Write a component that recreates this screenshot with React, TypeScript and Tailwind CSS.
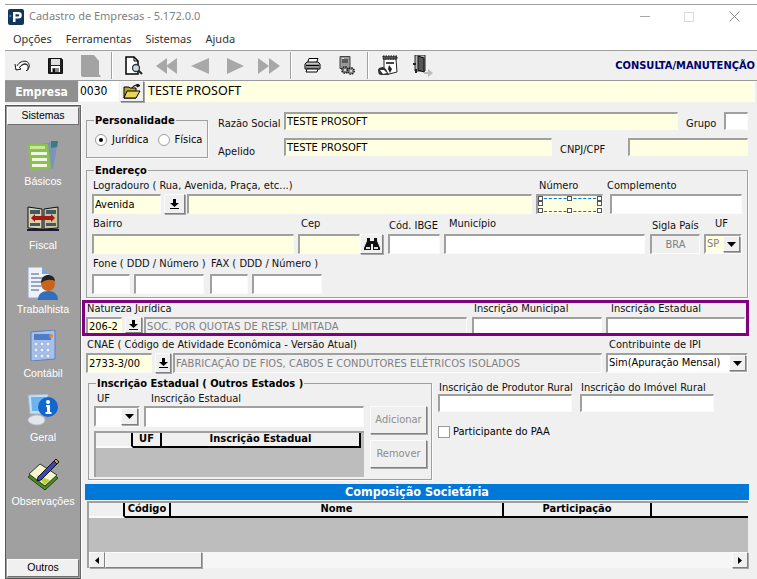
import React from "react";

const sunk = "border-t-2 border-l-2 border-r border-b border-t-[#a0a0a0] border-l-[#a0a0a0] border-r-[#fbfbfb] border-b-[#fbfbfb]";

function Field({ className = "", text, textClass = "" }: { className?: string; text?: string; textClass?: string }) {
  return (
    <div className={`${sunk} shrink-0 flex items-center overflow-hidden whitespace-nowrap pl-[1px] text-[11px] leading-none ${className}`}>
      {text && <span className={textClass}>{text}</span>}
    </div>
  );
}

function RaisedBtn({ className = "", children }: { className?: string; children?: React.ReactNode }) {
  return (
    <div className={`shrink-0 flex items-center justify-center bg-[#f0f0f0] border border-t-[#fbfbfb] border-l-[#fbfbfb] border-r-[#808080] border-b-[#808080] shadow-[1px_1px_0_#a8a8a8] ${className}`}>
      {children}
    </div>
  );
}

const DownArrow = () => (
  <svg width="9" height="10" viewBox="0 0 9 10"><path d="M3 0h3v4h3L4.500 8 0 4h3z" fill="#000" /><path d="M0 9h9v1H0z" fill="#000" /></svg>
);

const Caret = () => (
  <svg width="9" height="5" viewBox="0 0 9 5"><path d="M0 0h9L4.500 5z" fill="#000" /></svg>
);

function Combo({ className = "", text, textClass = "" }: { className?: string; text?: string; textClass?: string }) {
  return (
    <div className={`border-2 border-t-[#a0a0a0] border-l-[#a0a0a0] border-r-[#fbfbfb] border-b-[#fbfbfb] shrink-0 flex bg-white text-[11px] ${className}`}>
      <div className={`flex-1 flex items-center pl-[1px] overflow-hidden whitespace-nowrap ${textClass}`}>{text}</div>
      <RaisedBtn className="w-[17px]"><Caret /></RaisedBtn>
    </div>
  );
}

function Group({ title, className = "", titleClass = "", children }: { title: string; className?: string; titleClass?: string; children?: React.ReactNode }) {
  return (
    <div className={`relative shrink-0 border border-[#a0a0a0] shadow-[1px_1px_0_#fbfbfb] ${className}`}>
      <div className={`absolute -top-[7px] left-[7px] bg-[#f0f0f0] px-[1px] font-bold text-[11px] leading-[14px] text-black whitespace-nowrap ${titleClass}`}>{title}</div>
      {children}
    </div>
  );
}

function Lab({ children, className = "" }: { children: React.ReactNode; className?: string }) {
  return <div className={`text-[11px] leading-[14px] whitespace-nowrap text-[#111] ${className}`}>{children}</div>;
}

const Radio = ({ on }: { on?: boolean }) => (
  <svg width="12" height="12" viewBox="0 0 12 12">
    <circle cx="6" cy="6" r="5.500" fill="#fff" stroke="#9a9a9a" />
    {on && <circle cx="6" cy="6" r="2" fill="#000" />}
  </svg>
);

const Sep = ({ ml }: { ml: string }) => <div className={`w-[2px] h-[27px] border-l border-l-[#a0a0a0] border-r border-r-white shrink-0 ${ml}`} />;

const Logo = () => (
  <svg width="16" height="16" viewBox="0 0 16 16">
    <rect width="16" height="16" rx="2" fill="#12355e" />
    <path d="M5 3h5.500a3.200 3.200 0 0 1 0 6.600H7.500V13H5z" fill="#fff" />
    <path d="M7.500 5.200v2.200h2.600a1.100 1.100 0 0 0 0-2.200z" fill="#12355e" />
    <path d="M1.500 5.500l2 1.500-2 1.500z" fill="#35a7e0" />
  </svg>
);

const Undo = () => (
  <svg width="16" height="12" viewBox="0 0 16 12" fill="none" stroke="#111"><path d="M1 4l1 6 5-1-1.500-1.500C8 4 11 3 13 5s1 4.500-1 6" fill="#fff" /><path d="M5.500 7.500C8 4.500 11 3.500 13.500 4.500M3 6C5 2 9 0.500 12.500 1.500c3 1 3.500 5 1.500 8l-1.500 1.500" /></svg>
);
const Save = () => (
  <svg width="15" height="16" viewBox="0 0 15 16"><path d="M.5.5h13l1 1v14H.5z" fill="#fff" stroke="#111" /><path d="M1 1h2v14H1zM12 1h2v14h-2zM3 7h9v1H3zM3 14h9v1H3z" fill="#222" /><path d="M3 1h9v6H3z" fill="#e0e0e0" /><path d="M4 10h7v4H4z" fill="#888" /><path d="M5 10.500h2v3.500H5z" fill="#111" /></svg>
);
const DisabledDoc = () => (
  <svg width="20" height="22" viewBox="0 0 20 22"><path d="M0 0h13l5 6v13l2 3H1l-1-2z" fill="#a3a3a3" /></svg>
);
const Preview = () => (
  <svg width="18" height="20" viewBox="0 0 18 20" fill="none"><path d="M1 1h8l4 4v13H1z" fill="#fff" stroke="#000" strokeWidth="1.500" /><path d="M9 1v4h4" stroke="#000" /><circle cx="11" cy="12" r="3.500" fill="#bfe0e8" stroke="#333" strokeWidth="1.300" /><path d="M13.500 14.500l3.500 3.500" stroke="#222" strokeWidth="2" /></svg>
);
const Tri = ({ d, w }: { d: string; w: number }) => <svg width={w} height="16" viewBox={`0 0 ${w} 16`}><path d={d} fill="#a8a8a8" /></svg>;
const Printer = () => (
  <svg width="17" height="15" viewBox="0 0 17 15"><path d="M5 .5h9l-1.500 4h-9z" fill="#fff" stroke="#000" /><path d="M1 6l2-2h11l2 2v5H1z" fill="#c8c8c8" stroke="#000" /><path d="M2 7.500h13" stroke="#000" strokeWidth="1.500" /><path d="M2 10h13" stroke="#555" /><path d="M3 11h11l-1 3H2z" fill="#fff" stroke="#000" /></svg>
);
const GearDoc = () => (
  <svg width="18" height="20" viewBox="0 0 18 20"><path d="M2 .5h10v12H2z" fill="#9a9a9a" stroke="#444" /><path d="M4 3h6v4H4z" fill="#5a5a5a" /><path d="M4 2h2v1H4z" fill="#ddd" /><circle cx="7" cy="14" r="3.200" fill="#777" stroke="#222" strokeWidth="1.500" strokeDasharray="1.500 1" /><circle cx="13" cy="15" r="3.200" fill="#888" stroke="#222" strokeWidth="1.500" strokeDasharray="1.500 1" /><circle cx="7" cy="14" r="1" fill="#eee" /><circle cx="13" cy="15" r="1" fill="#eee" /></svg>
);
const Tool = () => (
  <svg width="22" height="22" viewBox="0 0 22 22"><path d="M7 4h12l1 13-8 2H7z" fill="#fff" stroke="#222" /><path d="M6 1h14v3H6z" fill="#555" stroke="#111" strokeDasharray="1.500 1" /><path d="M9 7h8v2H9z" fill="#444" /><path d="M1 15c0-2 3-3 5-3l3 2 3 6H4c-2 0-3-2-3-5z" fill="#333" /><path d="M3 15h4l3 3-4 1z" fill="#fff" /><path d="M12 10l3 4-2 4-2-4z" fill="#222" /></svg>
);
const Door = () => (
  <svg width="20" height="22" viewBox="0 0 20 22"><path d="M2 0h10v16H2z" fill="#b8b8b8" stroke="#222" /><path d="M5 1l6 2v14l-6-2z" fill="#555" stroke="#111" /><path d="M0 9h3" stroke="#222" strokeWidth="2" /><path d="M3 14v4" stroke="#222" strokeWidth="2" /><path d="M11 17h4v-3l5 4-5 4v-3h-4z" fill="#bdbdbd" /></svg>
);
const Folder = () => (
  <svg width="18" height="15" viewBox="0 0 18 15"><path d="M1 3h5l1 1h6v10H1z" fill="#bfa628" stroke="#000" /><path d="M1 14l3-7h13l-4 7z" fill="#e8d85a" stroke="#000" /><path d="M9 4c1-2 3-3 5-3M14 0v3l3-1.500z" stroke="#000" fill="#333" /></svg>
);
const Binoculars = () => (
  <svg width="16" height="12" viewBox="0 0 16 12"><path d="M3 0h3v3h4V0h3v3l3 7v2H9V6H7v6H0v-2l3-7z" fill="#111" /><path d="M2 9h4v2H2zM10 9h4v2h-4z" fill="#ddd" /></svg>
);

const IBasicos = () => (
  <svg width="32" height="32" viewBox="0 0 32 32">
    <path d="M14 4l17-3-5 28-8-2z" fill="#7d94b8" />
    <path d="M24 1l7 0-1 6-6 1z" fill="#3a7d7e" />
    <path d="M1 4l20 0 3 24-20 3z" fill="#8bc34a" />
    <path d="M3 6h15v3H3z" fill="#c9e6a0" />
    <path d="M4 12h16v3H4zM5 18h15v3H5zM5 24h15v3H5z" fill="#f2f8e8" />
  </svg>
);
const IFiscal = () => (
  <svg width="32" height="26" viewBox="0 0 32 26">
    <path d="M1 2l14 2v20L1 23z" fill="#d7d2a8" stroke="#111" />
    <path d="M31 2l-14 2v20l14-1z" fill="#c9c39c" stroke="#111" />
    <path d="M0 24h32v2H0z" fill="#1a1a3a" />
    <path d="M3 5h10v4H3zM19 5h10v4H19zM3 18h10v3H3zM19 18h10v3H19z" fill="#3e5a6a" />
    <path d="M4 13l4-4v2h16V9l4 4-4 4v-2H8v2z" fill="#a61616" />
  </svg>
);
const ITrab = () => (
  <svg width="32" height="33" viewBox="0 0 32 33">
    <path d="M1 0h14l7 7v24H1z" fill="#eef2fb" stroke="#93a4cf" />
    <path d="M15 0v7h7z" fill="#7ea3e0" />
    <path d="M4 7h8M4 11h12M4 15h10M4 19h10M4 23h8" stroke="#4a5a80" />
    <path d="M11 33c0-6 4-9 10-9s10 3 10 9z" fill="#2e6fc0" />
    <circle cx="21" cy="17" r="7" fill="#c9641a" />
    <path d="M14 16c0-6 4-8 7-8s7 2 7 6c-4-2-9-2-14 2z" fill="#222" />
  </svg>
);
const ICont = () => (
  <svg width="26" height="31" viewBox="0 0 26 31">
    <path d="M1 2l24-2v29L1 31z" fill="#a9c0ea" stroke="#5c7fbf" />
    <path d="M4 4h17v6H4z" fill="#4d7cc8" />
    <g fill="#e8effa" stroke="#6d8cc4" strokeWidth=".5"><circle cx="6" cy="14" r="2" /><circle cx="12" cy="14" r="2" /><circle cx="18" cy="14" r="2" /><circle cx="6" cy="20" r="2" /><circle cx="12" cy="20" r="2" /><circle cx="18" cy="20" r="2" /><circle cx="6" cy="26" r="2" /><circle cx="12" cy="26" r="2" /><circle cx="18" cy="26" r="2" /></g>
    <circle cx="21" cy="6" r="2" fill="#e38b2c" />
  </svg>
);
const IGeral = () => (
  <svg width="32" height="32" viewBox="0 0 32 32">
    <path d="M1 1l20-1v20H3z" fill="#bfe0f8" stroke="#a8b2c0" />
    <path d="M4 3h14v14H5z" fill="#6db4ee" />
    <path d="M1 26c0-3 5-5 9-5s8 2 8 5-4 5-8 5-9-2-9-5z" fill="#e3e6ea" stroke="#b5bcc5" />
    <circle cx="21" cy="13" r="10" fill="#1565d0" />
    <path d="M19 11h4v7h1.500v2h-6v-2H20v-5h-1z" fill="#fff" />
    <circle cx="21" cy="8" r="2" fill="#fff" />
  </svg>
);
const IObs = () => (
  <svg width="32" height="33" viewBox="0 0 32 33">
    <path d="M1 19L13 8l18 12-13 12z" fill="#4a8a1e" stroke="#1e4a0a" />
    <path d="M2 16L13 6l17 11-12 11z" fill="#f4f7cc" stroke="#333" />
    <path d="M9 17l14 5-5 5z" fill="#b8d43a" />
    <path d="M11 19L27 3l3 3-16 16-4 1z" fill="#3b46b8" stroke="#111" />
    <path d="M27 3l2-2 3 3-2 2z" fill="#c9a06a" stroke="#111" />
  </svg>
);

function SideItem({ icon, label, pad = "" }: { icon: React.ReactNode; label: string; pad?: string }) {
  return (
    <div className="h-[64px] flex flex-col items-center">
      <div className={`flex h-[33px] items-center justify-center ${pad}`}>{icon}</div>
      <div className="font-['Liberation_Sans',sans-serif] text-[10.7px] leading-[14px] text-white mt-[2px] whitespace-nowrap">{label}</div>
    </div>
  );
}

function SideBtn({ children }: { children: React.ReactNode }) {
  return <div className="h-[18px] mx-[1px] bg-[#f0f0f0] border border-t-[#fbfbfb] border-l-[#fbfbfb] border-r-[#707070] border-b-[#707070] flex items-center justify-center font-['Liberation_Sans',sans-serif] text-[10.5px] text-black">{children}</div>;
}

const Handle = ({ className }: { className: string }) => <div className={`absolute w-[5px] h-[5px] bg-white border border-[#555] ${className}`} />;

function HCell({ className = "", children }: { className?: string; children?: React.ReactNode }) {
  return <div className={`h-full shrink-0 flex items-center justify-center font-bold text-[11px] text-black bg-[#f0f0f0] border-r-2 border-r-black border-b-2 border-b-black ${className}`}>{children}</div>;
}

export default function App() {
  return (
    <div className="w-[757px] h-[579px] bg-white overflow-hidden font-['DejaVu_Sans_Condensed','Noto_Sans',sans-serif] text-black flex flex-col pt-[4px] pl-[5px]">
      {/* title */}
      <div className="h-[1px] bg-[#a0a0a0] shrink-0" />
      <div className="h-[23px] flex items-center pl-[3px] shrink-0">
        <Logo />
        <span className="ml-[5px] font-['Noto_Sans',sans-serif] text-[11px] text-[#7f7f7f]">Cadastro de Empresas - 5.172.0.0</span>
        <div className="ml-auto flex items-center">
          <div className="w-[10px] h-[1px] bg-[#a8a8a8]" />
          <div className="ml-[34px] w-[10px] h-[10px] border border-[#dcdcdc]" />
          <svg className="ml-[35px] mr-[17px]" width="11" height="11" viewBox="0 0 11 11"><path d="M.5.5l10 10M10.500.5l-10 10" stroke="#8a8a8a" /></svg>
        </div>
      </div>
      {/* menu */}
      <div className="h-[22px] flex items-center pl-[8px] pt-[1px] gap-[14px] font-['Noto_Sans',sans-serif] text-[11px] text-[#333] shrink-0">
        <span>Opções</span><span>Ferramentas</span><span>Sistemas</span><span>Ajuda</span>
      </div>
      <div className="h-[1px] bg-[#a0a0a0] shrink-0" />
      {/* toolbar */}
      <div className="h-[29px] bg-[#f0f0f0] flex items-center pl-[9px] shrink-0 border-b border-b-[#9a9a9a] box-content">
        <Undo />
        <div className="ml-[18px]"><Save /></div>
        <div className="ml-[18px]"><DisabledDoc /></div>
        <Sep ml="ml-[10px]" />
        <div className="ml-[12px]"><Preview /></div>
        <div className="ml-[13px]"><Tri w={21} d="M0 8l11-8v16zM10 8l11-8v16z" /></div>
        <div className="ml-[14px]"><Tri w={18} d="M0 8l18-8v16z" /></div>
        <div className="ml-[18px]"><Tri w={17} d="M17 8L0 0v16z" /></div>
        <div className="ml-[14px]"><Tri w={22} d="M11 8L0 0v16zM22 8L11 0v16z" /></div>
        <Sep ml="ml-[10px]" />
        <div className="ml-[12px]"><Printer /></div>
        <div className="ml-[17px]"><GearDoc /></div>
        <Sep ml="ml-[11px]" />
        <div className="ml-[8px]"><Tool /></div>
        <div className="ml-[14px]"><Door /></div>
        <div className="ml-auto mr-[2px] text-[11px] font-bold text-[#00006e] whitespace-nowrap pt-[2px]">CONSULTA/MANUTENÇÃO</div>
      </div>
      {/* empresa */}
      <div className="h-[23px] flex bg-[#f0f0f0] pr-[2px] pb-[2px] shrink-0">
        <div className="w-[73px] bg-[#909090] flex items-center justify-center text-white font-bold text-[12px] mr-[1px]">Empresa</div>
        <Field className="w-[40px] bg-white !border-t-0 !border-l-0 text-[12px]" text="0030" />
        <RaisedBtn className="w-[24px] h-[21px] ml-[1px]"><Folder /></RaisedBtn>
        <Field className="flex-1 bg-[#ffffe1] ml-[1px] !border-t-0 !border-l-0 pl-[3px] text-[12.5px] font-['Noto_Sans',sans-serif]" text="TESTE PROSOFT" />
      </div>
      <div className="flex-1 flex min-h-0">
        {/* sidebar */}
        <div className="mt-[1px] w-[76px] bg-[#a0a0a0] border border-[#555] border-r-[#666] flex flex-col shrink-0 pt-[1px] pb-[1px]">
          <SideBtn>Sistemas</SideBtn>
          <div className="flex-1 flex flex-col pt-[14px]">
            <SideItem icon={<IBasicos />} label="Básicos" />
            <SideItem icon={<IFiscal />} label="Fiscal" pad="pb-[4px]" />
            <SideItem icon={<ITrab />} label="Trabalhista" />
            <SideItem icon={<ICont />} label="Contábil" pad="pb-[4px]" />
            <SideItem icon={<IGeral />} label="Geral" pad="pb-[3px]" />
            <SideItem icon={<IObs />} label="Observações" pad="pb-[2px]" />
          </div>
          <SideBtn>Outros</SideBtn>
        </div>
        {/* form */}
        <div className="flex-1 min-w-0 ml-[1px] bg-[#f0f0f0] pl-[4px] flex flex-col">
          {/* row 1 */}
          <div className="flex h-[66px] shrink-0">
            <Group title="Personalidade" className="w-[122px] h-[38px] mt-[16px]">
              <div className="flex items-center pl-[8px] pt-[12px] text-[11px] leading-[14px]">
                <Radio on /><span className="ml-[5px]">Jurídica</span>
                <div className="ml-[9px]"><Radio /></div><span className="ml-[5px]">Física</span>
              </div>
            </Group>
            <div className="ml-[10px] flex flex-col">
              <div className="flex h-[26px] mt-[8px] items-start">
                <Lab className="w-[66px] mt-[5px]">Razão Social</Lab>
                <Field className="w-[394px] h-[18px] bg-[#ffffe1]" text="TESTE PROSOFT" />
                <Lab className="ml-[8px] w-[38px] mt-[5px]">Grupo</Lab>
                <Field className="w-[24px] h-[18px] bg-white" />
              </div>
              <div className="flex items-start">
                <Lab className="w-[66px] mt-[7px]">Apelido</Lab>
                <Field className="w-[268px] h-[18px] bg-[#ffffe1]" text="TESTE PROSOFT" />
                <Lab className="ml-[8px] w-[68px] mt-[5px]">CNPJ/CPF</Lab>
                <Field className="w-[120px] h-[18px] bg-[#ffffe1]" />
              </div>
            </div>
          </div>
          {/* endereco */}
          <Group title="Endereço" className="w-[662px] h-[128px] shrink-0">
            <div className="flex pl-[5px] pt-[7px] h-[46px]">
              <div className="w-[440px] flex flex-col">
                <Lab className="h-[16px] pl-[1px] pt-[1px]">Logradouro ( Rua, Avenida, Praça, etc...)</Lab>
                <div className="flex h-[20px]">
                  <Field className="w-[69px] bg-[#ffffe1]" text="Avenida" />
                  <RaisedBtn className="w-[21px] ml-[3px]"><DownArrow /></RaisedBtn>
                  <Field className="w-[345px] ml-[2px] bg-[#ffffe1]" />
                </div>
              </div>
              <div className="ml-[4px] w-[67px]">
                <Lab className="h-[16px] pl-[3px] pt-[1px]">Número</Lab>
                <div className={`relative h-[20px] bg-[#ffffe1] ${sunk}`}>
                  <div className="absolute left-[1px] right-[1px] top-[2px] border-t border-dashed border-t-[#0078d7]" />
                  <div className="absolute left-[1px] right-[1px] bottom-[1px] border-t border-dashed border-t-[#0078d7]" />
                  <Handle className="left-0 top-0" /><Handle className="left-[29px] top-0" /><Handle className="right-0 top-0" />
                  <Handle className="left-0 top-[5px]" /><Handle className="right-0 top-[5px]" />
                  <Handle className="left-0 bottom-0" /><Handle className="left-[29px] bottom-0" /><Handle className="right-0 bottom-0" />
                </div>
              </div>
              <div className="ml-[7px] w-[132px]">
                <Lab className="h-[16px] -ml-[3px] pt-[1px]">Complemento</Lab>
                <Field className="w-full h-[20px] bg-white" />
              </div>
            </div>
            <div className="flex pl-[5px] mt-[1px] h-[36px]">
              <div className="w-[202px]"><Lab className="h-[16px] pl-[1px] !leading-[12px]">Bairro</Lab><Field className="w-full h-[20px] bg-[#ffffe1]" /></div>
              <div className="ml-[4px] w-[85px]">
                <Lab className="h-[16px] pl-[3px] !leading-[12px]">Cep</Lab>
                <div className="flex h-[20px]">
                  <Field className="w-[62px] bg-[#ffffe1]" />
                  <RaisedBtn className="w-[23px]"><Binoculars /></RaisedBtn>
                </div>
              </div>
              <div className="ml-[5px] w-[52px]"><Lab className="h-[16px] pt-[1px] pl-[1px]">Cód. IBGE</Lab><Field className="w-full h-[20px] bg-white" /></div>
              <div className="ml-[4px] w-[201px]"><Lab className="h-[16px] pl-[5px] !leading-[12px]">Município</Lab><Field className="w-full h-[20px] bg-white" /></div>
              <div className="ml-[5px] w-[50px]">
                <Lab className="h-[16px] pt-[1px] pl-[2px]">Sigla País</Lab>
                <Field className="w-full h-[20px] bg-[#f0f0f0] justify-center !pl-0" text="BRA" textClass="text-[#808080]" />
              </div>
              <div className="ml-[4px] w-[38px]">
                <Lab className="h-[16px] pl-[11px] !leading-[12px]">UF</Lab>
                <div className="h-[20px] flex border-2 border-[#a0a0a0] border-r-[#fbfbfb] border-b-[#fbfbfb]">
                  <div className="w-[17px] bg-[#ffffe1] flex items-center text-[11px] text-[#808080] pl-[1px]">SP</div>
                  <RaisedBtn className="flex-1"><Caret /></RaisedBtn>
                </div>
              </div>
            </div>
            <div className="flex pl-[5px] mt-[3px]">
              <div className="w-[112px]">
                <Lab className="h-[17px] pl-[1px]">Fone ( DDD / Número )</Lab>
                <div className="flex h-[20px] gap-[4px]"><Field className="w-[38px] bg-white" /><Field className="w-[70px] bg-white" /></div>
              </div>
              <div className="ml-[6px]">
                <Lab className="h-[17px] pl-[1px]">FAX ( DDD / Número )</Lab>
                <div className="flex h-[20px] gap-[4px]"><Field className="w-[38px] bg-white" /><Field className="w-[70px] bg-white" /></div>
              </div>
            </div>
          </Group>
          {/* natureza */}
          <div className="-ml-[4px] mt-[2px] w-[667px] h-[36px] border-[3px] border-[#800080] flex pl-[1px] shrink-0 overflow-hidden">
            <div className="w-[386px]">
              <Lab className="h-[14px] pl-[1px] !leading-[12px]">Natureza Jurídica</Lab>
              <div className="flex h-[18px]">
                <Field className="w-[36px] bg-[#ffffe1]" text="206-2" />
                <RaisedBtn className="w-[17px] h-[16px] ml-[3px]"><DownArrow /></RaisedBtn>
                <Field className="w-[323px] ml-[2px] bg-[#f0f0f0]" text="SOC. POR QUOTAS DE RESP. LIMITADA" textClass="text-[#808080] tracking-[0.1px]" />
              </div>
            </div>
            <div className="w-[130px]">
              <Lab className="h-[14px] pl-[2px] !leading-[12px]">Inscrição Municipal</Lab>
              <Field className="w-full h-[18px] bg-white" />
            </div>
            <div className="ml-[4px] w-[139px]">
              <Lab className="h-[14px] pl-[5px] !leading-[12px]">Inscrição Estadual</Lab>
              <Field className="w-full h-[18px] bg-white" />
            </div>
          </div>
          {/* cnae */}
          <div className="flex mt-[1px] h-[36px] shrink-0">
            <div className="w-[516px]">
              <Lab className="h-[16px] pl-[1px] pt-[1px]">CNAE ( Código de Atividade Econômica - Versão Atual)</Lab>
              <div className="flex h-[20px]">
                <Field className="w-[66px] bg-[#ffffe1]" text="2733-3/00" />
                <RaisedBtn className="w-[16px] ml-[3px]"><DownArrow /></RaisedBtn>
                <Field className="w-[429px] ml-[2px] bg-[#f0f0f0]" text="FABRICAÇÃO DE FIOS, CABOS E CONDUTORES ELÉTRICOS ISOLADOS" textClass="text-[#808080] tracking-[0.05px]" />
              </div>
            </div>
            <div className="ml-[4px] w-[142px]">
              <Lab className="h-[16px] pl-[3px] pt-[1px]">Contribuinte de IPI</Lab>
              <Combo className="w-full h-[20px]" text="Sim(Apuração Mensal)" />
            </div>
          </div>
          {/* inscricao */}
          <div className="flex mt-[10px] shrink-0">
            <Group title="Inscrição Estadual ( Outros Estados )" className="ml-[2px] w-[344px] h-[97px]">
              <div className="flex pl-[5px] pt-[8px]">
                <div className="w-[270px]">
                  <div className="flex h-[14px]"><Lab className="w-[57px] pl-[3px]">UF</Lab><Lab>Inscrição Estadual</Lab></div>
                  <div className="flex h-[21px] gap-[4px]">
                    <Combo className="w-[46px]" />
                    <Field className="w-[220px] bg-white" />
                  </div>
                  <div className="mt-[4px] h-[46px] border-t-2 border-l-2 border-[#a0a0a0] bg-[#bdbdbd]">
                    <div className="flex h-[15px]">
                      <HCell className="w-[37px] !border-b-[#fbfbfb]" />
                      <HCell className="w-[29px]">UF</HCell>
                      <HCell className="w-[199px]">Inscrição Estadual</HCell>
                    </div>
                  </div>
                </div>
                <div className="ml-[6px] mt-[14px] flex flex-col gap-[6px]">
                  <RaisedBtn className="w-[57px] h-[28px] text-[11px] text-[#8d8d8d]">Adicionar</RaisedBtn>
                  <RaisedBtn className="w-[57px] h-[28px] text-[11px] text-[#8d8d8d]">Remover</RaisedBtn>
                </div>
              </div>
            </Group>
            <div className="ml-[6px] flex flex-col">
              <div className="flex">
                <div className="w-[134px]"><Lab className="h-[12px] pl-[1px] -mt-[2px]">Inscrição de Produtor Rural</Lab><Field className="w-full h-[18px] mt-[1px] bg-white" /></div>
                <div className="ml-[8px] w-[134px]"><Lab className="h-[12px] pl-[1px] -mt-[2px]">Inscrição do Imóvel Rural</Lab><Field className="w-full h-[18px] mt-[1px] bg-white" /></div>
              </div>
              <div className="flex items-center mt-[12px] text-[11px]">
                <div className="w-[12px] h-[12px] bg-white border border-[#9a9a9a]" />
                <span className="ml-[3px]">Participante do PAA</span>
              </div>
            </div>
          </div>
          {/* composição */}
          <div className="mt-[4px] -ml-[1px] w-[664px] h-[16px] bg-[#0078d7] flex items-center justify-center text-white font-bold text-[12.5px] shrink-0">Composição Societária</div>
          <div className="ml-[1px] mt-[1px] w-[661px] h-[67px] bg-[#bdbdbd] border-l-2 border-t-2 border-[#a0a0a0] flex flex-col shrink-0">
            <div className="flex h-[15px] bg-[#f0f0f0] shrink-0">
              <HCell className="w-[36px] !border-b-[#fbfbfb]" />
              <HCell className="w-[46px]">Código</HCell>
              <HCell className="w-[333px]">Nome</HCell>
              <HCell className="w-[148px]">Participação</HCell>
              <HCell className="flex-1 !border-r-0" />
            </div>
            <div className="flex-1" />
            <div className="h-[16px] flex bg-[#f6f6f6] shrink-0">
              <RaisedBtn className="w-[16px]"><svg width="4" height="7" viewBox="0 0 4 7"><path d="M4 0v7L0 3.500z" /></svg></RaisedBtn>
              <RaisedBtn className="w-[97px]" />
              <div className="flex-1" />
              <RaisedBtn className="w-[16px]"><svg width="4" height="7" viewBox="0 0 4 7"><path d="M0 0v7l4-3.500z" /></svg></RaisedBtn>
            </div>
          </div>
        </div>
      </div>
    </div>
  );
}
